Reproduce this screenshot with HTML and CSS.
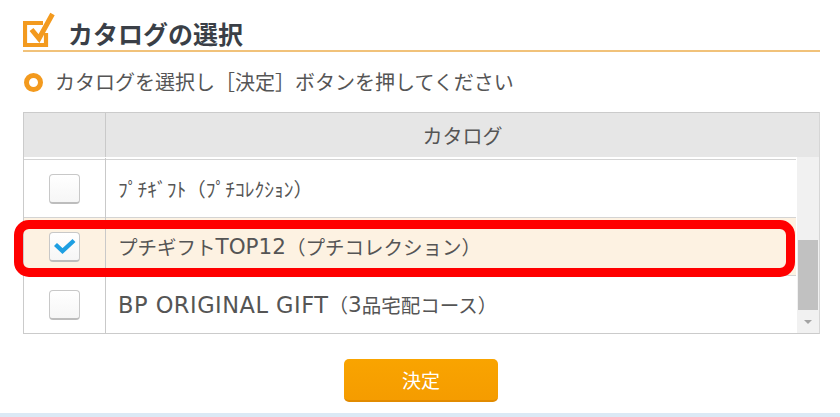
FILE: index.html
```html
<!DOCTYPE html>
<html lang="ja">
<head>
<meta charset="utf-8">
<title>カタログの選択</title>
<link rel="stylesheet" href="styles.css">
</head>
<body>
<div class="page">
  <div class="title">
    <svg class="title-icon" width="32" height="38" viewBox="0 0 32 38">
      <path d="M20 13 H2 V35 H23 V23" fill="none" stroke="#f39a1e" stroke-width="4.2" stroke-linejoin="miter"/>
      <path d="M8.5 19.5 L16 28.5 L29.5 4" fill="none" stroke="#f39a1e" stroke-width="5" stroke-linejoin="miter"/>
    </svg>
    <h1 class="title-text">カタログの選択</h1>
  </div>
  <div class="sub">
    <span class="ring"></span>
    <p class="sub-text">カタログを選択し［決定］ボタンを押してください</p>
  </div>
  <div class="table">
    <div class="thead">
      <div class="th-check"></div>
      <div class="th-name">カタログ</div>
    </div>
    <div class="tbody">
      <div class="rows">
        <div class="row">
          <div class="cell-check"><span class="box"></span></div>
          <div class="cell-name">ﾌﾟﾁｷﾞﾌﾄ（ﾌﾟﾁｺﾚｸｼｮﾝ）</div>
        </div>
        <div class="row row-selected">
          <div class="cell-check">
            <span class="box box-checked">
              <svg width="31" height="30" viewBox="0 0 31 30"><path d="M6.5 12.5 L13.5 19 L25 8.5" fill="none" stroke="#1e9fe2" stroke-width="4.4"/></svg>
            </span>
          </div>
          <div class="cell-name">プチギフト<span class="latin">TOP12</span>（プチコレクション）</div>
        </div>
        <div class="row">
          <div class="cell-check"><span class="box"></span></div>
          <div class="cell-name"><span class="latin latin-wide">BP ORIGINAL GIFT</span>（<span class="latin">3</span>品宅配コース）</div>
        </div>
      </div>
      <div class="scrollbar">
        <div class="thumb"></div>
        <div class="arrow"></div>
      </div>
    </div>
    <div class="highlight"></div>
  </div>
  <div class="actions">
    <button class="btn" type="button">決定</button>
  </div>
</div>
<div class="footer-line"></div>
</body>
</html>
```

FILE: styles.css
```css
* { box-sizing: border-box; }
html, body { margin: 0; padding: 0; background: #fff; }
body {
  font-family: "Noto Sans CJK JP", sans-serif;
  color: #555;
  width: 840px;
  height: 417px;
  overflow: hidden;
}
.page {
  padding: 0 20px 0 23px;
  height: 413px;
}
.title {
  display: flex;
  align-items: flex-start;
  gap: 13px;
  height: 52px;
  padding-top: 10px;
  border-bottom: 2px solid #f1c27a;
}
.title-icon { display: block; flex: none; }
.title-text {
  margin: 11px 0 0;
  font-size: 25px;
  line-height: 25px;
  font-weight: 700;
  color: #3a3f47;
}
.sub {
  display: flex;
  align-items: center;
  height: 60px;
  padding-left: 1px;
}
.ring {
  width: 19px;
  height: 19px;
  border: 5px solid #f39a1e;
  border-radius: 50%;
  flex: none;
}
.sub-text {
  margin: 0 0 0 12px;
  font-size: 20px;
  line-height: 24px;
  color: #555;
}
.table {
  position: relative;
  border: 1px solid #cbcbcb;
  border-right-color: #d6d6d6;
}
.thead {
  display: flex;
  height: 44px;
  background: #e6e6e6;
}
.th-check {
  width: 82px;
  border-right: 1px solid #c9c9c9;
}
.th-name {
  flex: 1;
  display: flex;
  align-items: center;
  justify-content: center;
  font-size: 20px;
  color: #555;
}
.tbody {
  display: flex;
  height: 176px;
}
.rows {
  flex: 1;
  padding-top: 2px;
  border-right: 1px solid #fff;
}
.row {
  display: flex;
  height: 58px;
  border-top: 1px solid #d4d4d4;
}
.row-selected { background: #fdf2e2; }
.cell-check {
  width: 82px;
  flex: none;
  border-right: 1px solid #c9c9c9;
  display: flex;
  align-items: center;
  justify-content: center;
  margin-top: -2px;
  padding-top: 2px;
}
.box {
  display: block;
  width: 31px;
  height: 30px;
  border: 1px solid #c8c8c8;
  border-bottom: 2px solid #bdbdbd;
  border-radius: 4px;
  background: linear-gradient(#fff, #f6f6f6);
  position: relative;
}
.box-checked svg {
  position: absolute;
  left: -1px;
  top: -1px;
}
.cell-name {
  flex: 1;
  display: flex;
  align-items: center;
  padding-left: 12px;
  font-size: 19.5px;
  color: #555;
  white-space: pre;
}
.latin {
  font-family: "DejaVu Sans", sans-serif;
  font-size: 21.5px;
}
.latin-wide {
  font-size: 22.5px;
  letter-spacing: 0.5px;
}
.scrollbar {
  width: 22px;
  flex: none;
  background: #f1f1f1;
  position: relative;
}
.thumb {
  position: absolute;
  left: 1px;
  right: 1px;
  top: 83px;
  height: 70px;
  background: #c1c1c1;
}
.arrow {
  position: absolute;
  left: 7px;
  top: 163px;
  width: 0;
  height: 0;
  border-left: 4px solid transparent;
  border-right: 4px solid transparent;
  border-top: 4px solid #a3a3a3;
}
.highlight {
  position: absolute;
  left: -10px;
  top: 107px;
  width: 781px;
  height: 57px;
  border: 9px solid #ff0000;
  border-radius: 15px;
  pointer-events: none;
}
.actions {
  display: flex;
  justify-content: center;
  padding-top: 25px;
  padding-right: 1px;
}
.btn {
  width: 154px;
  height: 43px;
  border: none;
  border-bottom: 2px solid #e28b00;
  border-radius: 5px;
  background: linear-gradient(#f9a400, #f59c00);
  color: #fff;
  font-family: "Noto Sans CJK JP", sans-serif;
  font-size: 19px;
  padding: 0;
}
.footer-line {
  height: 4px;
  background: #dbe9f5;
}
```
